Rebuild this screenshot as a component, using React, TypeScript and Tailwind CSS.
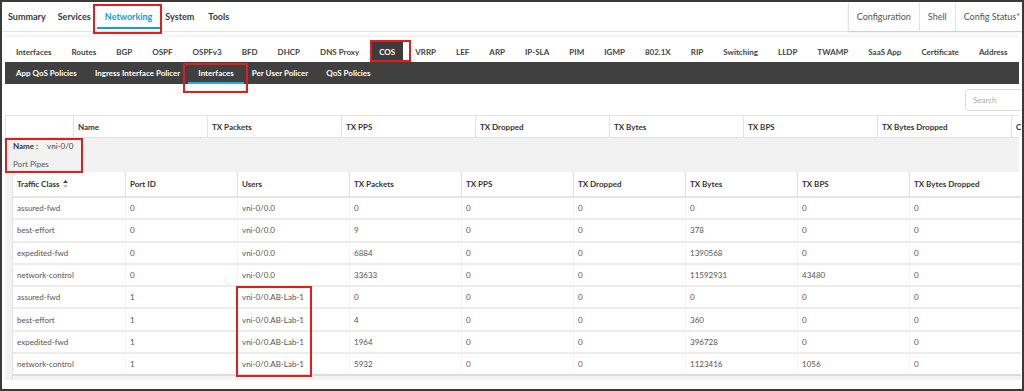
import React from "react";

const topTabs = [
  "Interfaces","Routes","BGP","OSPF","OSPFv3","BFD","DHCP","DNS Proxy","COS","VRRP","LEF","ARP","IP-SLA","PIM","IGMP","802.1X","RIP","Switching","LLDP","TWAMP","SaaS App","Certificate","Address",
];
const subTabs = ["App QoS Policies","Ingress Interface Policer","Interfaces","Per User Policer","QoS Policies"];
const outerCols = ["Name","TX Packets","TX PPS","TX Dropped","TX Bytes","TX BPS","TX Bytes Dropped","C"];
const innerCols = ["Traffic Class","Port ID","Users","TX Packets","TX PPS","TX Dropped","TX Bytes","TX BPS","TX Bytes Dropped"];
const rows = [
  ["assured-fwd","0","vni-0/0.0","0","0","0","0","0","0"],
  ["best-effort","0","vni-0/0.0","9","0","0","378","0","0"],
  ["expedited-fwd","0","vni-0/0.0","6884","0","0","1390568","0","0"],
  ["network-control","0","vni-0/0.0","33633","0","0","11592931","43480","0"],
  ["assured-fwd","1","vni-0/0.AB-Lab-1","0","0","0","0","0","0"],
  ["best-effort","1","vni-0/0.AB-Lab-1","4","0","0","360","0","0"],
  ["expedited-fwd","1","vni-0/0.AB-Lab-1","1964","0","0","396728","0","0"],
  ["network-control","1","vni-0/0.AB-Lab-1","5932","0","0","1123416","1056","0"],
];

function SortIcon() {
  return (
    <svg width="5" height="8" viewBox="0 0 5 8" className="ml-[4px] inline-block">
      <path d="M2.5 0 L5 3 L0 3 Z" fill="#444" />
      <path d="M2.5 8 L5 5 L0 5 Z" fill="#bbb" />
    </svg>
  );
}

export default function App() {
  return (
    <div className="relative w-[1024px] h-[391px] overflow-hidden border-2 border-[#3a3a3a] bg-white font-['Lato',sans-serif] text-[#333]">
      {/* top nav */}
      <div className="flex h-[30px] justify-between border-b border-[#e2e2e2]">
        <div className="flex items-center pl-[6px] text-[9px] font-bold text-[#3a3a3a]">
          <span className="mr-[12px]">Summary</span>
          <span className="mr-[6px]">Services</span>
          <span className="relative flex h-full items-center px-[8px] text-[#1c9ad6]">
            Networking
            <span className="absolute bottom-[2px] left-0 right-0 h-[2px] bg-[#1c9ad6]" />
          </span>
          <span className="ml-[5px] mr-[14px]">System</span>
          <span>Tools</span>
        </div>
        <div className="mt-[1px] flex h-[28px] text-[9px] text-[#555] shadow-[0_1px_2px_rgba(0,0,0,0.12)]">
          <span className="flex items-center border-l border-r border-[#e2e2e2] px-[8px]">Configuration</span>
          <span className="flex items-center border-r border-[#e2e2e2] px-[8px]">Shell</span>
          <span className="flex items-center pl-[8px] pr-[2px]">Config Status*</span>
        </div>
      </div>

      <div className="mx-[3px] mt-[5px]">
        {/* tab bar */}
        <div className="flex h-[25px] items-end overflow-hidden whitespace-nowrap pl-[1px] text-[8px] font-bold text-[#444] shadow-[0_-2px_3px_rgba(0,0,0,0.06)]">
          {topTabs.map((t) => (
            <span
              key={t}
              className={
                t === "COS"
                  ? "mx-[2px] flex h-[21px] shrink-0 items-center bg-[#3c3c3c] px-[8px] text-white"
                  : "flex h-[21px] shrink-0 items-center px-[10px]"
              }
            >
              {t}
            </span>
          ))}
        </div>
        {/* sub tab bar */}
        <div className="flex h-[22px] items-stretch bg-[#404040] pl-[2px] text-[8px] font-bold text-white">
          {subTabs.map((t) => (
            <span key={t} className="relative flex items-center px-[9px]">
              {t}
              {t === "Interfaces" && (
                <span className="absolute bottom-0 left-[-1px] right-[-1px] h-[2px] bg-[#2aa8e2]" />
              )}
            </span>
          ))}
        </div>
        {/* search row */}
        <div className="flex h-[31px] items-center justify-end">
          <div className="mr-[-4px] flex h-[22px] w-[58px] items-center rounded-[3px] border border-[#dcdcdc] pl-[7px] text-[8px] text-[#aaa]">
            Search
          </div>
        </div>
        {/* outer header */}
        <div className="flex h-[23px] whitespace-nowrap border-y border-[#e2e2e2] text-[8px] font-bold">
          <div className="w-[68px] shrink-0 border-l border-[#e2e2e2]" />
          {outerCols.map((c) => (
            <div key={c} className="flex w-[134px] shrink-0 items-center border-l border-[#e2e2e2] pl-[4px]">
              {c}
            </div>
          ))}
        </div>
        {/* group row */}
        <div className="flex h-[34px] flex-col justify-center gap-[6px] border-l border-[#e2e2e2] bg-[#f2f2f2] pl-[7px] text-[8px]">
          <div>
            <span className="font-bold">Name :</span>
            <span className="ml-[9px] text-[#444]">vni-0/0</span>
          </div>
          <div className="text-[#555]">Port Pipes</div>
        </div>
        {/* inner table */}
        <div className="flex">
          <div className="w-[7px] shrink-0 bg-[#f2f2f2]" />
          <div className="flex-1 border-l border-[#e2e2e2] text-[8px]">
            <div className="flex h-[26px] border-b-2 border-[#e6e6e6] font-bold">
              {innerCols.map((c, i) => (
                <div key={c} className={"flex w-[112px] shrink-0 items-center pl-[4px] " + (i > 0 ? "border-l border-[#e2e2e2]" : "")}>
                  {c}
                  {i === 0 && <SortIcon />}
                </div>
              ))}
            </div>
            {rows.map((r, ri) => (
              <div key={ri} className={"flex h-[22.3px] text-[#555] " + (ri === rows.length - 1 ? "border-b-2 border-[#dcdcdc]" : "border-b-2 border-[#ececec]")}>
                {r.map((v, i) => (
                  <div key={i} className={"flex w-[112px] shrink-0 items-center pl-[4px] " + (i > 0 ? "border-l border-[#f3f3f3]" : "")}>
                    {v}
                  </div>
                ))}
              </div>
            ))}
            <div className="h-[4px] bg-[#f4f4f4]" />
          </div>
        </div>
      </div>

      {/* red annotation boxes */}
      <div className="absolute left-[91px] top-[2px] h-[30px] w-[69px] border-2 border-[#e11d1d]" />
      <div className="absolute left-[368px] top-[38px] h-[22px] w-[41px] border-2 border-[#e11d1d]" />
      <div className="absolute left-[181px] top-[61px] h-[30px] w-[65px] border-2 border-[#e11d1d]" />
      <div className="absolute left-[3px] top-[136px] h-[35px] w-[78px] border-2 border-[#e11d1d]" />
      <div className="absolute left-[234px] top-[284px] h-[91px] w-[76px] border-2 border-[#e11d1d]" />
    </div>
  );
}
